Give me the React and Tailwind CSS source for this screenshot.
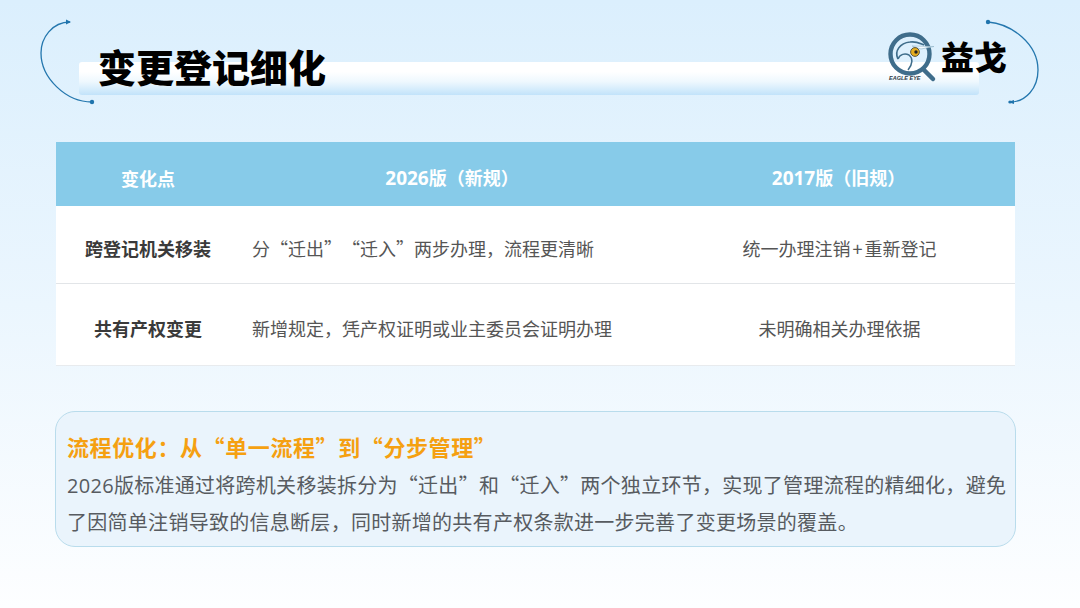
const cjk = "font-['Noto_Sans_CJK_SC','Noto_Sans',sans-serif]";

const rows = [
  {
    name: "跨登记机关移装",
    next: <>分“迁出”<span className="ml-[9px]">“迁入”两步办理，流程更清晰</span></>,
    old: <>统一办理注销<span className="mx-[2px]">+</span>重新登记</>,
    h: "h-[78px] border-b border-[#e2e5e8]",
  },
  {
    name: "共有产权变更",
    next: "新增规定，凭产权证明或业主委员会证明办理",
    old: "未明确相关办理依据",
    h: "h-[82px] border-b border-[#e8ebee]",
  },
];

function Arc({ flip }) {
  return (
    <svg width="60" height="92" viewBox="0 0 60 92" className={flip ? "absolute left-[982px] top-[18px]" : "absolute left-[38px] top-[18px]"} fill="none">
      {flip ? (
        <>
          <path d="M6 4 C30 6 56 26 56 52 C56 70 44 84 28 84" stroke="#2477ae" strokeWidth="1.3" />
          <circle cx="6" cy="4" r="2.2" fill="#1f74ad" />
          <path d="M32 82 L26 84 L32 86 Z" fill="#1f74ad" />
          <circle cx="28" cy="84" r="1.6" fill="#1f74ad" />
        </>
      ) : (
        <>
          <path d="M32 4 C14 4 3 20 3 35 C3 60 28 84 54 84" stroke="#2477ae" strokeWidth="1.3" />
          <path d="M28 1.5 L33 4 L28 6.5 Z" fill="#1f74ad" />
          <circle cx="54" cy="84" r="2.2" fill="#1f74ad" />
        </>
      )}
    </svg>
  );
}

function Logo() {
  return (
    <svg width="52" height="52" viewBox="0 0 52 52" className="block">
      <circle cx="22" cy="22" r="19.5" fill="none" stroke="#3f6d8b" strokeWidth="4.4" />
      <path d="M36 38 L45 47" stroke="#3f6d8b" strokeWidth="4.5" strokeLinecap="round" />
      {/* head outline, beak faces left */}
      <path d="M10 27 C6 19 12 11 22 10 C28 9 31 11 36 13" stroke="#3f6d8b" strokeWidth="1.7" fill="none" />
      <path d="M10 27 C12 22 17 21 21 23 C25 26 25 32 20 38" stroke="#3f6d8b" strokeWidth="1.5" fill="none" />
      <path d="M24 14 L46 14.5 L33 17 Z" fill="#f4fafe" stroke="#8fb3c8" strokeWidth="0.6" />
      <circle cx="27" cy="20" r="4.4" fill="#e5ad1e" stroke="#4c4a36" strokeWidth="0.9" />
      <circle cx="28" cy="20" r="1.7" fill="#222" />
      <text x="1" y="47.5" fontSize="5.5" fontWeight="800" fontStyle="italic" fill="#2c3a46" fontFamily="'Liberation Sans',sans-serif">EAGLE EYE</text>
    </svg>
  );
}

export default function App() {
  return (
    <div className={`relative w-[1080px] h-[608px] overflow-hidden bg-gradient-to-b from-[#dbeffd] via-[#ebf6fe] to-[#fdfeff] ${cjk}`}>
      <Arc />
      <Arc flip />

      {/* title band */}
      <div className="flex h-[142px] pl-[79px] pr-[101px] pt-[62px]">
        <div className="relative w-full h-[33px] rounded-[3px] bg-gradient-to-b from-white from-30% via-[#eef8fe] via-60% to-[#c2e3fa]">
          <h1 className="absolute left-[19px] top-[-22px] text-[38px] leading-[52px] font-black text-black whitespace-nowrap">变更登记细化</h1>
          <div className="absolute left-[809px] top-[-30px] flex items-start gap-[1px]">
            <Logo />
            <span className="mt-[2px] text-[33px] leading-[44px] font-black text-black whitespace-nowrap">益戈</span>
          </div>
        </div>
      </div>

      {/* table */}
      <div className="mx-[56px] w-[959px]">
        <div className="flex h-[64px] items-center bg-[#87cbe9] pt-[8px] text-[18px] font-bold text-white">
          <div className="w-[184px] text-center">变化点</div>
          <div className="w-[424px] text-center"><span className="font-['Open_Sans'] text-[19px]">2026</span>版（新规）</div>
          <div className="flex-1 pr-[2px] text-center"><span className="font-['Open_Sans'] text-[19px]">2017</span>版（旧规）</div>
        </div>
        {rows.map((r) => (
          <div key={r.name} className={`flex items-center bg-white pt-[8px] ${r.h}`}>
            <div className="w-[184px] text-center text-[18px] font-bold text-[#3a3a3a]">{r.name}</div>
            <div className="w-[424px] pl-[12px] text-[18px] text-[#555]">{r.next}</div>
            <div className="flex-1 text-center text-[18px] text-[#555]">{r.old}</div>
          </div>
        ))}
      </div>

      {/* summary box */}
      <div className="mx-[55px] mt-[45px] w-[961px] h-[136px] rounded-[20px] border border-[#b9dcec] bg-[#eaf4fc] pl-[11px] pt-[19px]">
        <div className="text-[22px] leading-[30px] tracking-[0.6px] font-bold text-[#f5a011]">流程优化：从“单一流程”到“分步管理”</div>
        <div className="mt-[6px] text-[20px] leading-[36px] tracking-[0.28px] text-[#575b60] whitespace-nowrap">
          <p><span className="font-['Open_Sans']">2026</span>版标准通过将跨机关移装拆分为“迁出”和“迁入”两个独立环节，实现了管理流程的精细化，避免</p>
          <p>了因简单注销导致的信息断层，同时新增的共有产权条款进一步完善了变更场景的覆盖。</p>
        </div>
      </div>
    </div>
  );
}
